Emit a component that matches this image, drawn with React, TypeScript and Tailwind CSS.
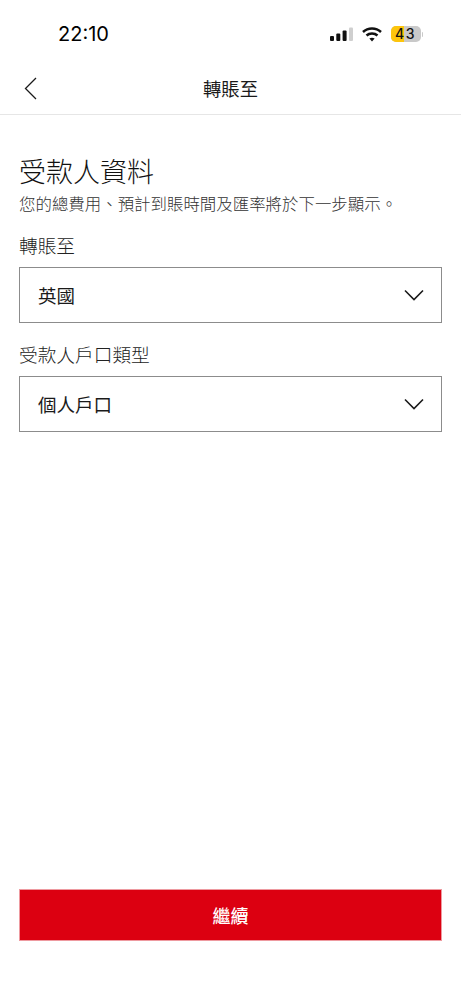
import * as React from 'react';

const font = { fontFamily: '"Noto Sans CJK TC", "Noto Sans", sans-serif' };

function Chevron() {
  return (
    <svg width="20" height="12" viewBox="0 0 20 12" fill="none" stroke="#1a1a1a" strokeWidth="1.6">
      <path d="M1 1.5 L10 10.5 L19 1.5" />
    </svg>
  );
}

function SelectBox({ value }: { value: string }) {
  return (
    <div className="h-[56px] border border-[#8c8c8c] flex items-center justify-between pl-[18px] pr-[17px]">
      <span className="text-[18.5px] leading-none text-[#1a1a1a]">{value}</span>
      <Chevron />
    </div>
  );
}

function StatusBar() {
  return (
    <div className="h-[68px] flex items-start justify-between pt-[22px] pl-[58px] pr-[38px]">
      <span
        className="text-[20px] leading-[24px] font-normal text-black"
        style={{ fontFamily: 'Inter, sans-serif' }}
      >
        22:10
      </span>
      <div className="flex items-center gap-[9px] h-[24px]">
        <svg width="23" height="14" viewBox="0 0 23 14">
          <rect x="0" y="9" width="4" height="5" rx="1" fill="#111" />
          <rect x="6.3" y="6.5" width="4" height="7.5" rx="1" fill="#111" />
          <rect x="12.6" y="3.5" width="4" height="10.5" rx="1" fill="#111" />
          <rect x="19" y="0.5" width="4" height="13.5" rx="1" fill="#cfcfcf" />
        </svg>
        <svg width="20" height="15" viewBox="0 0 20 15" fill="none" stroke="#111" strokeWidth="2.5">
          <path d="M1 5 C6 0.3 14 0.3 19 5" />
          <path d="M4.5 8.5 C7.5 5.8 12.5 5.8 15.5 8.5" />
          <path d="M10 14.6 L7.4 11.6 C8.8 10.5 11.2 10.5 12.6 11.6 Z" fill="#111" stroke="none" />
        </svg>
        <div className="flex items-center gap-[1px]">
          <div className="relative w-[30px] h-[16px] rounded-[5px] bg-[#c9c9c9] overflow-hidden flex items-center justify-center">
            <div className="absolute left-0 top-0 bottom-0 w-[13px] bg-[#fdc50c]" />
            <span
              className="relative text-[14px] leading-none font-medium tracking-[1.5px] text-[#111]"
              style={{ fontFamily: 'Inter, sans-serif' }}
            >
              43
            </span>
          </div>
          <div className="w-[1.5px] h-[5px] rounded-r-sm bg-[#c9c9c9]" />
        </div>
      </div>
    </div>
  );
}

export default function App() {
  return (
    <div className="w-[461px] h-[1000px] bg-white flex flex-col" style={font}>
      <StatusBar />
      <div className="relative h-[47px] pb-[6px] border-b border-[#e6e6e6] flex items-center justify-center">
        <svg className="absolute left-[24px] top-[9px]" width="13" height="23" viewBox="0 0 13 23" fill="none" stroke="#1a1a1a" strokeWidth="1.3">
          <path d="M12 1 L1.5 11.5 L12 22" />
        </svg>
        <span className="text-[18.3px] leading-none text-[#1a1a1a]">轉賬至</span>
      </div>
      <div className="flex-1 flex flex-col px-[19px]">
        <h1 className="mt-[39px] text-[27px] leading-[34px] font-light text-[#111]">受款人資料</h1>
        <p className="mt-[3px] text-[16.45px] leading-[24px] font-light text-[#333] whitespace-nowrap">
          您的總費用、預計到賬時間及匯率將於下一步顯示。
        </p>
        <label className="mt-[17px] mb-[9px] text-[18.7px] leading-[26px] font-light text-[#222]">轉賬至</label>
        <SelectBox value="英國" />
        <label className="mt-[18px] mb-[9px] text-[18.7px] leading-[26px] font-light text-[#222]">受款人戶口類型</label>
        <SelectBox value="個人戶口" />
        <button className="mt-auto mb-[59px] h-[52px] w-full bg-[#dc0011] border border-[#ee9aa0] text-white text-[18px] font-medium">
          繼續
        </button>
      </div>
    </div>
  );
}
